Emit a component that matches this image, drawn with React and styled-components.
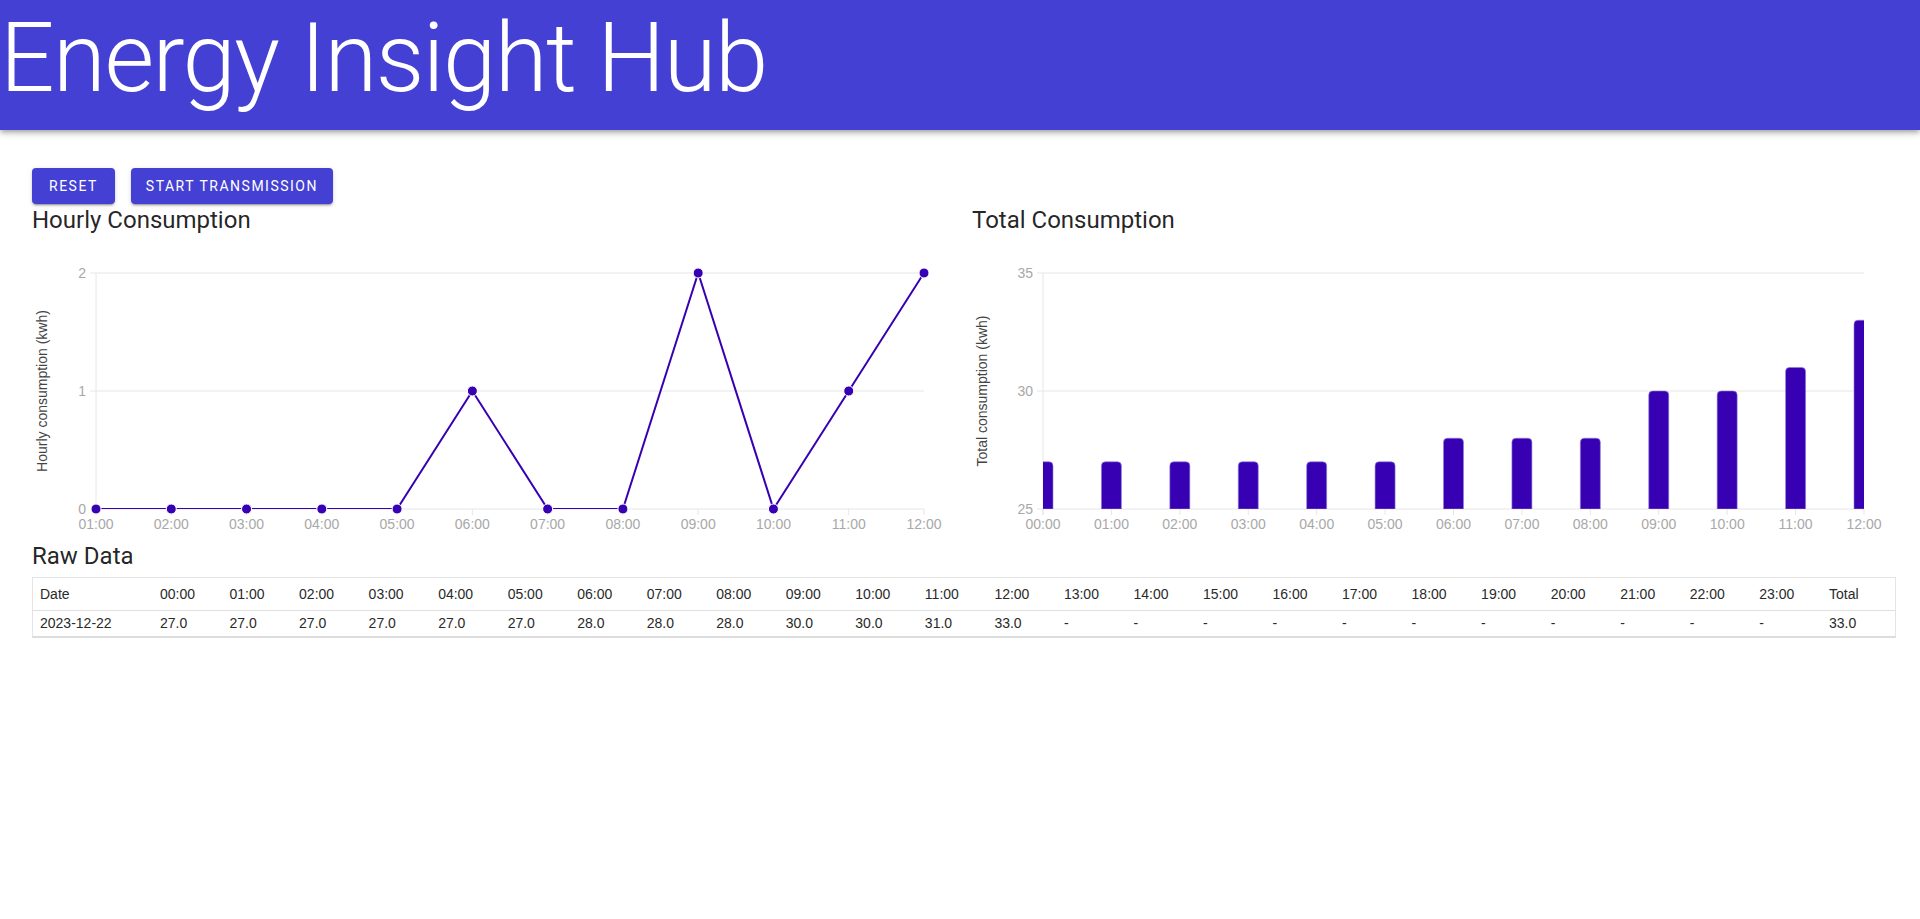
import React from 'react'
import styled, { createGlobalStyle } from 'styled-components'

const primary = '#4440d4'
const series = '#3700b3'
const chartFont = '"Liberation Sans", Arial, sans-serif'

const GlobalStyle = createGlobalStyle`
  body {
    margin: 0;
    background: #fff;
    color: rgba(0, 0, 0, 0.87);
    font-family: Roboto, "Liberation Sans", sans-serif;
  }
`

const AppBar = styled.header`
  height: 130px;
  background: ${primary};
  color: #fff;
  box-shadow: 0 2px 4px -1px rgba(0, 0, 0, 0.2), 0 4px 5px 0 rgba(0, 0, 0, 0.14), 0 1px 10px 0 rgba(0, 0, 0, 0.12);
`

const Title = styled.h1`
  margin: 0;
  padding-top: 2px;
  font-size: 96px;
  font-weight: 300;
  line-height: 112px;
  letter-spacing: -1.5px;
`

const Main = styled.main`
  padding: 38px 24px 40px 32px;
`

const Toolbar = styled.div`
  display: flex;
  gap: 16px;
`

const Button = styled.button`
  height: 36px;
  padding: 0 ${p => (p.$wide ? 15 : 17)}px;
  border: none;
  border-radius: 4px;
  background: ${primary};
  color: #fff;
  font-family: Roboto, sans-serif;
  font-size: 14px;
  font-weight: 400;
  letter-spacing: 1.5px;
  text-transform: uppercase;
  cursor: pointer;
  box-shadow: 0 3px 1px -2px rgba(0, 0, 0, 0.2), 0 2px 2px 0 rgba(0, 0, 0, 0.14), 0 1px 5px 0 rgba(0, 0, 0, 0.12);
`

const ChartsGrid = styled.div`
  display: grid;
  grid-template-columns: 1fr 1fr;
  column-gap: 16px;
`

const Heading = styled.h5`
  margin: 0;
  font-size: 24px;
  font-weight: 400;
  line-height: 32px;
  color: rgba(0, 0, 0, 0.87);
`

const ChartSvg = styled.svg`
  display: block;
  width: 100%;
  height: auto;
`

const GridLine = styled.line`
  stroke: #e6e6e6;
  stroke-width: 1;
`

const TickLabel = styled.text`
  font-family: ${chartFont};
  font-size: 14px;
  fill: #a8a8a8;
`

const AxisTitle = styled.text`
  font-family: ${chartFont};
  font-size: 14px;
  fill: #444;
`

const SeriesLine = styled.polyline`
  fill: none;
  stroke: ${series};
  stroke-width: 2;
  stroke-linejoin: round;
`

const Point = styled.circle`
  fill: ${series};
  stroke: #fff;
  stroke-width: 1;
`

const Bar = styled.path`
  fill: ${series};
  stroke: #8f7fd6;
  stroke-width: 0.6;
`

const TablePaper = styled.div`
  margin-top: 5px;
  border: 1px solid #e4e4e4;
  border-bottom: 2px solid #dcdcdc;
`

const Table = styled.table`
  width: 100%;
  border-collapse: collapse;
  table-layout: fixed;
  font-family: ${chartFont};
  font-size: 14px;
  color: #2a2a2a;
`

const Cell = styled.td`
  padding: ${p => (p.$head ? '8px 7px' : '4px 7px 5px')};
  border-bottom: ${p => (p.$head ? '1px solid #e0e0e0' : 'none')};
  text-align: left;
  font-weight: 400;
  white-space: nowrap;
`

// chart geometry, in viewBox units (one column is 924px wide)
const W = 924
const H = 304
const TOP = 37
const BOTTOM = 273
const RIGHT = 892

const hours = Array.from({ length: 24 }, (_, i) => `${String(i).padStart(2, '0')}:00`)
const totals = [27, 27, 27, 27, 27, 27, 28, 28, 28, 30, 30, 31, 33]
const hourly = [0, 0, 0, 0, 0, 1, 0, 0, 2, 0, 1, 2]

function Axes({ id, left, yTicks, yMin, yMax, xLabels, yTitle, children }) {
  const xAt = i => left + (i * (RIGHT - left)) / (xLabels.length - 1)
  const yAt = v => BOTTOM - ((v - yMin) / (yMax - yMin)) * (BOTTOM - TOP)
  return (
    <ChartSvg viewBox={`0 0 ${W} ${H}`}>
      <defs>
        <clipPath id={id}>
          <rect x={left} y={TOP} width={RIGHT - left} height={BOTTOM - TOP} />
        </clipPath>
      </defs>
      {yTicks.map(t => (
        <GridLine key={t} x1={left - 6} x2={RIGHT} y1={yAt(t)} y2={yAt(t)} />
      ))}
      <GridLine x1={left} x2={left} y1={TOP} y2={BOTTOM + 6} />
      {xLabels.map((l, i) => (
        <GridLine key={l} x1={xAt(i)} x2={xAt(i)} y1={BOTTOM} y2={BOTTOM + 6} />
      ))}
      {yTicks.map(t => (
        <TickLabel key={t} x={left - 10} y={yAt(t) + 5} textAnchor="end">{t}</TickLabel>
      ))}
      {xLabels.map((l, i) => (
        <TickLabel key={l} x={xAt(i)} y={BOTTOM + 20} textAnchor="middle">{l}</TickLabel>
      ))}
      <AxisTitle transform={`translate(15 ${(TOP + BOTTOM) / 2}) rotate(-90)`} textAnchor="middle">
        {yTitle}
      </AxisTitle>
      {children(xAt, yAt)}
    </ChartSvg>
  )
}

function HourlyChart() {
  return (
    <Axes id="hourly-clip" left={64} yTicks={[0, 1, 2]} yMin={0} yMax={2}
      xLabels={hours.slice(1, 13)} yTitle="Hourly consumption (kwh)">
      {(xAt, yAt) => (
        <>
          <SeriesLine clipPath="url(#hourly-clip)"
            points={hourly.map((v, i) => `${xAt(i)},${yAt(v)}`).join(' ')} />
          {hourly.map((v, i) => <Point key={i} cx={xAt(i)} cy={yAt(v)} r={5} />)}
        </>
      )}
    </Axes>
  )
}

function TotalChart() {
  const bar = (x, top) => {
    const r = 4
    return `M${x - 10},${BOTTOM} V${top + r} Q${x - 10},${top} ${x - 10 + r},${top} H${x + 10 - r} Q${x + 10},${top} ${x + 10},${top + r} V${BOTTOM} Z`
  }
  return (
    <Axes id="total-clip" left={71} yTicks={[25, 30, 35]} yMin={25} yMax={35}
      xLabels={hours.slice(0, 13)} yTitle="Total consumption (kwh)">
      {(xAt, yAt) => (
        <g clipPath="url(#total-clip)">
          {totals.map((v, i) => <Bar key={i} d={bar(xAt(i), yAt(v))} />)}
        </g>
      )}
    </Axes>
  )
}

export default function App() {
  const row = hours.map((_, i) => (totals[i] !== undefined ? totals[i].toFixed(1) : '-'))
  return (
    <>
      <GlobalStyle />
      <AppBar>
        <Title>Energy Insight Hub</Title>
      </AppBar>
      <Main>
        <Toolbar>
          <Button>Reset</Button>
          <Button $wide>Start Transmission</Button>
        </Toolbar>
        <ChartsGrid>
          <div>
            <Heading>Hourly Consumption</Heading>
            <HourlyChart />
          </div>
          <div>
            <Heading>Total Consumption</Heading>
            <TotalChart />
          </div>
        </ChartsGrid>
        <Heading>Raw Data</Heading>
        <TablePaper>
          <Table>
            <colgroup>
              <col style={{ width: 120 }} />
              {hours.map(h => <col key={h} />)}
              <col style={{ width: 73 }} />
            </colgroup>
            <thead>
              <tr>
                <Cell as="th" $head>Date</Cell>
                {hours.map(h => <Cell as="th" $head key={h}>{h}</Cell>)}
                <Cell as="th" $head>Total</Cell>
              </tr>
            </thead>
            <tbody>
              <tr>
                <Cell>2023-12-22</Cell>
                {row.map((v, i) => <Cell key={i}>{v}</Cell>)}
                <Cell>33.0</Cell>
              </tr>
            </tbody>
          </Table>
        </TablePaper>
      </Main>
    </>
  )
}
